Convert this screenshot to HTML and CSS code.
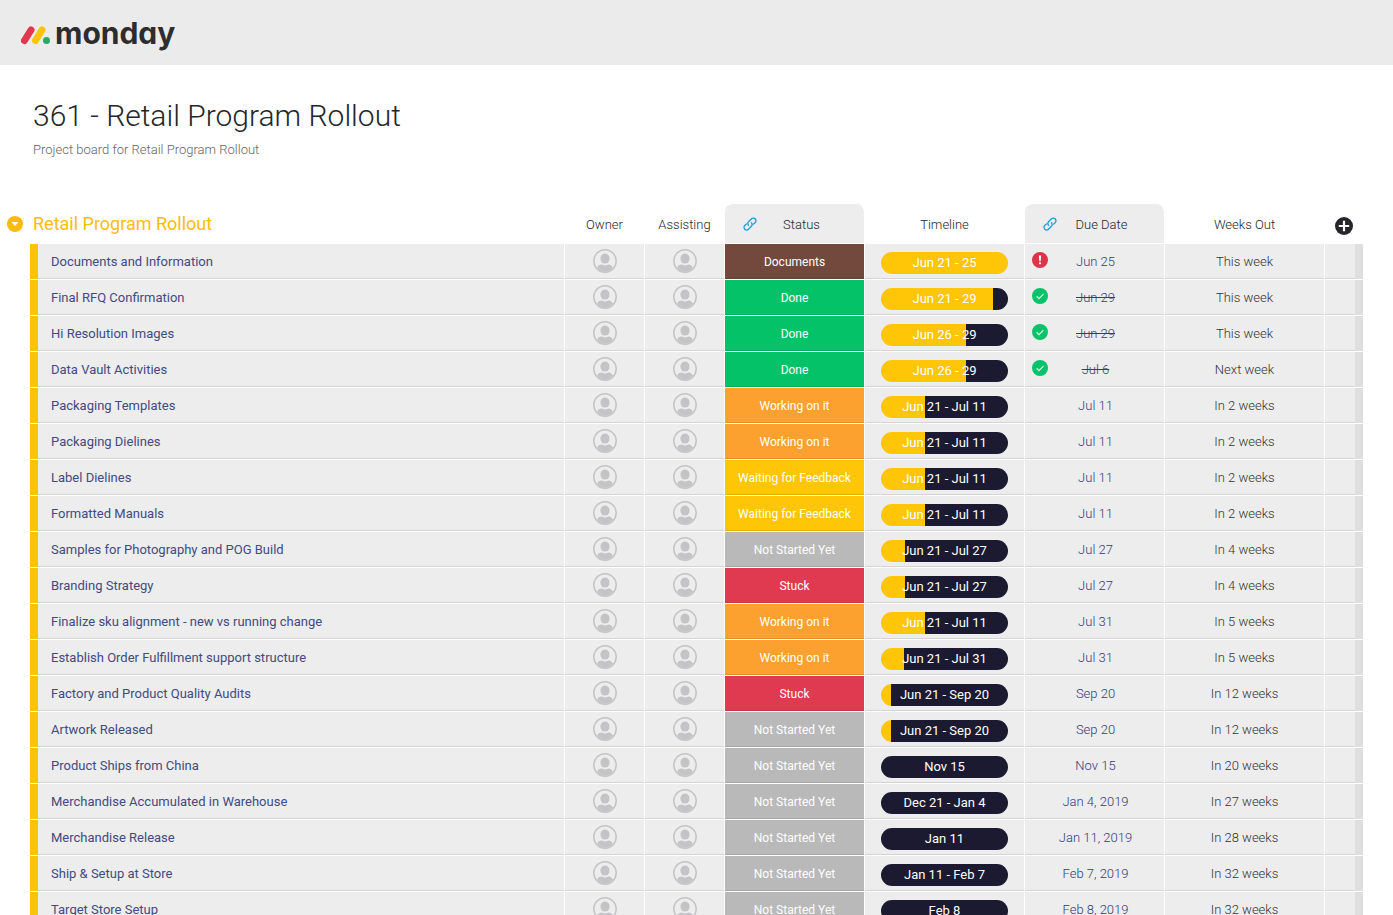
FILE: index.html
```html
<!DOCTYPE html>
<html lang="en">
  <head>
    <meta charset="UTF-8" />
    <title>361 - Retail Program Rollout</title>
    <link rel="stylesheet" href="styles.css">
  </head>
  <body>
    <svg class="sprite" aria-hidden="true">
      <symbol id="avatar" viewBox="0 0 24 24">
        <circle cx="12" cy="12" r="11.2" fill="none" stroke="#c4c4c6" stroke-width="1.5" />
        <ellipse cx="12" cy="9.6" rx="4.6" ry="5" fill="#c4c4c6" />
        <path d="M4.200 18.500c.6-2 2.600-2.600 4.600-2.900 1.900 1.200 4.500 1.200 6.400 0 2 .3 4 .9 4.600 2.900-1.800 2.600-4.600 4.300-7.800 4.300s-6-1.700-7.800-4.300z" fill="#c4c4c6" />
      </symbol>
      <symbol id="link" viewBox="0 0 14 14">
        <g fill="none" stroke="#1c9cd6" stroke-width="1.3" stroke-linecap="round" stroke-linejoin="round">
          <path d="M5.600 8.400a2.600 2.600 0 0 1 0-3.700l2.900-2.900a2.600 2.600 0 0 1 3.700 3.700L10.600 7.100" />
          <path d="M8.400 5.600a2.600 2.600 0 0 1 0 3.700l-2.900 2.900a2.600 2.600 0 0 1-3.700-3.700L3.400 6.900" />
        </g>
      </symbol>
      <symbol id="check" viewBox="0 0 16 16">
        <circle cx="8" cy="8" r="8" fill="#06c26a" />
        <path d="M4.600 8.300l2.400 2.300 4.400-4.400" fill="none" stroke="#d4f5e4" stroke-width="1.200" />
      </symbol>
      <symbol id="alert" viewBox="0 0 16 16">
        <circle cx="8" cy="8" r="8" fill="#dc3549" />
        <path d="M6.900 3.400h2.200l-.4 5.800H7.300z" fill="#fff" />
        <circle cx="8" cy="11.300" r="1.100" fill="#fff" />
      </symbol>
    </svg>

    <header class="topbar">
      <a class="logo" href="#">
        <svg width="29" height="20" viewBox="0 0 29 20" aria-hidden="true">
          <g fill="none" stroke-width="7" stroke-linecap="round">
            <path d="M3.500 15.500L10 5" stroke="#e0394f" />
            <path d="M14.500 15.500L21 5" stroke="#fcc30c" />
          </g>
          <circle cx="25.500" cy="15.500" r="3.500" fill="#2ba866" />
        </svg>
        <span>monday</span>
      </a>
    </header>

    <main>
      <div class="board-header">
        <h1>361 - Retail Program Rollout</h1>
        <p>Project board for Retail Program Rollout</p>
      </div>

      <table class="board">
        <colgroup>
          <col>
          <col class="col-person">
          <col class="col-person">
          <col class="col-status">
          <col class="col-wide">
          <col class="col-status">
          <col class="col-wide">
          <col class="col-add">
        </colgroup>
        <thead>
          <tr>
            <th class="group">
              <div>
                <button class="collapse" aria-label="Collapse group">
                  <svg width="16" height="16" viewBox="0 0 16 16"><circle cx="8" cy="8" r="8" fill="#fdbc0b" /><path d="M4.500 6h7L8 10z" fill="#fff" /></svg>
                </button>
                <h2>Retail Program Rollout</h2>
              </div>
            </th>
            <th>Owner</th>
            <th>Assisting</th>
            <th class="linked"><div><svg><use href="#link" /></svg><span>Status</span></div></th>
            <th>Timeline</th>
            <th class="linked"><div><svg><use href="#link" /></svg><span>Due Date</span></div></th>
            <th>Weeks Out</th>
            <th class="add">
              <button aria-label="Add column">
                <svg width="18" height="18" viewBox="0 0 18 18"><circle cx="9" cy="9" r="9" fill="#25262b" /><path d="M9 3.800v10.400M3.800 9h10.400" stroke="#fff" stroke-width="2.200" /></svg>
              </button>
            </th>
          </tr>
        </thead>
        <tbody>
          <tr>
            <td class="name">Documents and Information</td>
            <td><svg class="avatar"><use href="#avatar" /></svg></td>
            <td><svg class="avatar"><use href="#avatar" /></svg></td>
            <td class="status documents">Documents</td>
            <td><div class="timeline" style="--elapsed: 100%">Jun 21 - 25</div></td>
            <td class="due"><div><svg><use href="#alert" /></svg><span>Jun 25</span></div></td>
            <td class="weeks">This week</td>
            <td class="end"></td>
          </tr>
          <tr>
            <td class="name">Final RFQ Confirmation</td>
            <td><svg class="avatar"><use href="#avatar" /></svg></td>
            <td><svg class="avatar"><use href="#avatar" /></svg></td>
            <td class="status done">Done</td>
            <td><div class="timeline" style="--elapsed: 88%">Jun 21 - 29</div></td>
            <td class="due"><div><svg><use href="#check" /></svg><s>Jun 29</s></div></td>
            <td class="weeks">This week</td>
            <td class="end"></td>
          </tr>
          <tr>
            <td class="name">Hi Resolution Images</td>
            <td><svg class="avatar"><use href="#avatar" /></svg></td>
            <td><svg class="avatar"><use href="#avatar" /></svg></td>
            <td class="status done">Done</td>
            <td><div class="timeline" style="--elapsed: 67%">Jun 26 - 29</div></td>
            <td class="due"><div><svg><use href="#check" /></svg><s>Jun 29</s></div></td>
            <td class="weeks">This week</td>
            <td class="end"></td>
          </tr>
          <tr>
            <td class="name">Data Vault Activities</td>
            <td><svg class="avatar"><use href="#avatar" /></svg></td>
            <td><svg class="avatar"><use href="#avatar" /></svg></td>
            <td class="status done">Done</td>
            <td><div class="timeline" style="--elapsed: 67%">Jun 26 - 29</div></td>
            <td class="due"><div><svg><use href="#check" /></svg><s>Jul 6</s></div></td>
            <td class="weeks">Next week</td>
            <td class="end"></td>
          </tr>
          <tr>
            <td class="name">Packaging Templates</td>
            <td><svg class="avatar"><use href="#avatar" /></svg></td>
            <td><svg class="avatar"><use href="#avatar" /></svg></td>
            <td class="status working">Working on it</td>
            <td><div class="timeline" style="--elapsed: 35%">Jun 21 - Jul 11</div></td>
            <td class="due"><div><span>Jul 11</span></div></td>
            <td class="weeks">In 2 weeks</td>
            <td class="end"></td>
          </tr>
          <tr>
            <td class="name">Packaging Dielines</td>
            <td><svg class="avatar"><use href="#avatar" /></svg></td>
            <td><svg class="avatar"><use href="#avatar" /></svg></td>
            <td class="status working">Working on it</td>
            <td><div class="timeline" style="--elapsed: 35%">Jun 21 - Jul 11</div></td>
            <td class="due"><div><span>Jul 11</span></div></td>
            <td class="weeks">In 2 weeks</td>
            <td class="end"></td>
          </tr>
          <tr>
            <td class="name">Label Dielines</td>
            <td><svg class="avatar"><use href="#avatar" /></svg></td>
            <td><svg class="avatar"><use href="#avatar" /></svg></td>
            <td class="status waiting">Waiting for Feedback</td>
            <td><div class="timeline" style="--elapsed: 35%">Jun 21 - Jul 11</div></td>
            <td class="due"><div><span>Jul 11</span></div></td>
            <td class="weeks">In 2 weeks</td>
            <td class="end"></td>
          </tr>
          <tr>
            <td class="name">Formatted Manuals</td>
            <td><svg class="avatar"><use href="#avatar" /></svg></td>
            <td><svg class="avatar"><use href="#avatar" /></svg></td>
            <td class="status waiting">Waiting for Feedback</td>
            <td><div class="timeline" style="--elapsed: 35%">Jun 21 - Jul 11</div></td>
            <td class="due"><div><span>Jul 11</span></div></td>
            <td class="weeks">In 2 weeks</td>
            <td class="end"></td>
          </tr>
          <tr>
            <td class="name">Samples for Photography and POG Build</td>
            <td><svg class="avatar"><use href="#avatar" /></svg></td>
            <td><svg class="avatar"><use href="#avatar" /></svg></td>
            <td class="status">Not Started Yet</td>
            <td><div class="timeline" style="--elapsed: 19%">Jun 21 - Jul 27</div></td>
            <td class="due"><div><span>Jul 27</span></div></td>
            <td class="weeks">In 4 weeks</td>
            <td class="end"></td>
          </tr>
          <tr>
            <td class="name">Branding Strategy</td>
            <td><svg class="avatar"><use href="#avatar" /></svg></td>
            <td><svg class="avatar"><use href="#avatar" /></svg></td>
            <td class="status stuck">Stuck</td>
            <td><div class="timeline" style="--elapsed: 19%">Jun 21 - Jul 27</div></td>
            <td class="due"><div><span>Jul 27</span></div></td>
            <td class="weeks">In 4 weeks</td>
            <td class="end"></td>
          </tr>
          <tr>
            <td class="name">Finalize sku alignment - new vs running change</td>
            <td><svg class="avatar"><use href="#avatar" /></svg></td>
            <td><svg class="avatar"><use href="#avatar" /></svg></td>
            <td class="status working">Working on it</td>
            <td><div class="timeline" style="--elapsed: 35%">Jun 21 - Jul 11</div></td>
            <td class="due"><div><span>Jul 31</span></div></td>
            <td class="weeks">In 5 weeks</td>
            <td class="end"></td>
          </tr>
          <tr>
            <td class="name">Establish Order Fulfillment support structure</td>
            <td><svg class="avatar"><use href="#avatar" /></svg></td>
            <td><svg class="avatar"><use href="#avatar" /></svg></td>
            <td class="status working">Working on it</td>
            <td><div class="timeline" style="--elapsed: 18%">Jun 21 - Jul 31</div></td>
            <td class="due"><div><span>Jul 31</span></div></td>
            <td class="weeks">In 5 weeks</td>
            <td class="end"></td>
          </tr>
          <tr>
            <td class="name">Factory and Product Quality Audits</td>
            <td><svg class="avatar"><use href="#avatar" /></svg></td>
            <td><svg class="avatar"><use href="#avatar" /></svg></td>
            <td class="status stuck">Stuck</td>
            <td><div class="timeline" style="--elapsed: 8%">Jun 21 - Sep 20</div></td>
            <td class="due"><div><span>Sep 20</span></div></td>
            <td class="weeks">In 12 weeks</td>
            <td class="end"></td>
          </tr>
          <tr>
            <td class="name">Artwork Released</td>
            <td><svg class="avatar"><use href="#avatar" /></svg></td>
            <td><svg class="avatar"><use href="#avatar" /></svg></td>
            <td class="status">Not Started Yet</td>
            <td><div class="timeline" style="--elapsed: 8%">Jun 21 - Sep 20</div></td>
            <td class="due"><div><span>Sep 20</span></div></td>
            <td class="weeks">In 12 weeks</td>
            <td class="end"></td>
          </tr>
          <tr>
            <td class="name">Product Ships from China</td>
            <td><svg class="avatar"><use href="#avatar" /></svg></td>
            <td><svg class="avatar"><use href="#avatar" /></svg></td>
            <td class="status">Not Started Yet</td>
            <td><div class="timeline">Nov 15</div></td>
            <td class="due"><div><span>Nov 15</span></div></td>
            <td class="weeks">In 20 weeks</td>
            <td class="end"></td>
          </tr>
          <tr>
            <td class="name">Merchandise Accumulated in Warehouse</td>
            <td><svg class="avatar"><use href="#avatar" /></svg></td>
            <td><svg class="avatar"><use href="#avatar" /></svg></td>
            <td class="status">Not Started Yet</td>
            <td><div class="timeline">Dec 21 - Jan 4</div></td>
            <td class="due"><div><span>Jan 4, 2019</span></div></td>
            <td class="weeks">In 27 weeks</td>
            <td class="end"></td>
          </tr>
          <tr>
            <td class="name">Merchandise Release</td>
            <td><svg class="avatar"><use href="#avatar" /></svg></td>
            <td><svg class="avatar"><use href="#avatar" /></svg></td>
            <td class="status">Not Started Yet</td>
            <td><div class="timeline">Jan 11</div></td>
            <td class="due"><div><span>Jan 11, 2019</span></div></td>
            <td class="weeks">In 28 weeks</td>
            <td class="end"></td>
          </tr>
          <tr>
            <td class="name">Ship &amp; Setup at Store</td>
            <td><svg class="avatar"><use href="#avatar" /></svg></td>
            <td><svg class="avatar"><use href="#avatar" /></svg></td>
            <td class="status">Not Started Yet</td>
            <td><div class="timeline">Jan 11 - Feb 7</div></td>
            <td class="due"><div><span>Feb 7, 2019</span></div></td>
            <td class="weeks">In 32 weeks</td>
            <td class="end"></td>
          </tr>
          <tr>
            <td class="name">Target Store Setup</td>
            <td><svg class="avatar"><use href="#avatar" /></svg></td>
            <td><svg class="avatar"><use href="#avatar" /></svg></td>
            <td class="status">Not Started Yet</td>
            <td><div class="timeline">Feb 8</div></td>
            <td class="due"><div><span>Feb 8, 2019</span></div></td>
            <td class="weeks">In 32 weeks</td>
            <td class="end"></td>
          </tr>
        </tbody>
      </table>
    </main>
  </body>
</html>
```
FILE: styles.css
```css
* {
  box-sizing: border-box;
}

body {
  margin: 0;
  height: 100vh;
  display: flex;
  flex-direction: column;
  background-color: #fff;
  color: #25262b;
  font-family: Roboto, 'Liberation Sans', sans-serif;
  font-size: 13px;
}

svg {
  display: block;
}

button {
  display: block;
  padding: 0;
  border: none;
  background-color: transparent;
  cursor: pointer;
}

.sprite {
  position: absolute;
  width: 0;
  height: 0;
}

.topbar {
  flex: none;
  height: 65px;
  padding: 0 21px;
  display: flex;
  align-items: center;
  background-color: #ebebeb;
}

.logo {
  display: flex;
  align-items: center;
  gap: 5px;
  color: #2d2d2f;
  font-family: Inter, sans-serif;
  font-size: 30px;
  font-weight: 700;
  font-feature-settings: 'cv11';
  line-height: 40px;
  text-decoration: none;
}

.logo svg {
  margin-top: 4px;
}

main {
  flex: 1;
  min-height: 0;
  overflow-y: auto;
  scrollbar-width: none;
  padding: 0 30px;
}

.board-header {
  padding: 31px 3px 44px;
}

h1 {
  margin: 0;
  font-size: 30px;
  font-weight: 300;
  line-height: 40px;
}

p {
  margin: 4px 0 0;
  color: #666;
  font-weight: 300;
  line-height: 20px;
}

.board {
  width: 100%;
  table-layout: fixed;
  border-collapse: separate;
  border-spacing: 0;
}

.col-person {
  width: 80px;
}

.col-status {
  width: 140px;
}

.col-wide {
  width: 160px;
}

.col-add {
  width: 38px;
}

th {
  height: 40px;
  padding: 2px 0 0;
  border-right: 1px solid #fff;
  border-bottom: 1px solid #fff;
  font-size: 13px;
  font-weight: 300;
  text-align: center;
}

.group {
  padding-top: 0;
}

.group > div {
  display: flex;
  align-items: center;
  gap: 10px;
  margin-left: -23px;
}

h2 {
  margin: 0;
  color: #fdbc0b;
  font-size: 18px;
  font-weight: 400;
  line-height: 24px;
}

.linked {
  border-radius: 8px 8px 0 0;
  background-color: #ededed;
  background-clip: padding-box;
}

.linked > div {
  display: grid;
  grid-template-columns: 14px 1fr;
  align-items: center;
  padding: 0 18px;
}

.linked svg {
  width: 14px;
  height: 14px;
  margin-bottom: 2px;
}

.add {
  padding: 4px 0 0 10px;
}

td {
  height: 36px;
  padding: 0;
  border-right: 1px solid #fff;
  border-bottom: 1px solid #fff;
  background-color: #ededed;
  box-shadow: inset 0 -1px rgba(0, 0, 0, 0.1);
  text-align: center;
}

.name {
  padding-left: 21px;
  box-shadow: inset 8px 0 #fdc30a, inset 0 -1px rgba(0, 0, 0, 0.1);
  color: #434a80;
  text-align: left;
}

.avatar {
  width: 24px;
  height: 24px;
  margin: 0 auto 1px;
}

.status {
  background-color: #b9b9b9;
  color: #fff;
  font-size: 12px;
}

.documents {
  background-color: #74493d;
}

.done {
  background-color: #03c268;
}

.working {
  background-color: #fca130;
}

.waiting {
  background-color: #ffc507;
}

.stuck {
  background-color: #df3a50;
}

.timeline {
  --elapsed: 0%;
  width: 127px;
  height: 22px;
  margin: 3px auto 0;
  border-radius: 11px;
  background-image: linear-gradient(to right, #ffc507 var(--elapsed), #1b1a31 0);
  color: #fff;
  line-height: 22px;
}

.due {
  color: #333b78;
  font-weight: 300;
}

.due > div {
  display: grid;
  grid-template-columns: 16px 1fr 16px;
  align-items: center;
  padding: 0 5px 0 7px;
}

.due svg {
  width: 16px;
  height: 16px;
  margin-bottom: 4px;
}

.due span,
.due s {
  grid-column: 2;
}

.weeks {
  color: #333;
  font-weight: 300;
}

.end {
  border-right: none;
  box-shadow: inset -8px 0 #dfdfdf, inset 0 -1px rgba(0, 0, 0, 0.1);
}
```
